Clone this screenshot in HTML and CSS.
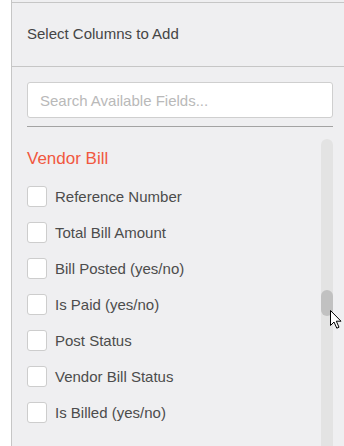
FILE: index.html
```html
<!DOCTYPE html>
<html lang="en">
<head>
<meta charset="utf-8">
<title>Select Columns</title>
<link rel="stylesheet" href="styles.css">
</head>
<body>
<div class="panel">
  <div class="header">Select Columns to Add</div>
  <div class="body">
    <div class="search-wrap">
      <input class="search" type="text" placeholder="Search Available Fields...">
    </div>
    <div class="list-area">
      <div class="list">
        <div class="group-title">Vendor Bill</div>
        <label class="row"><span class="box"></span><span class="label">Reference Number</span></label>
        <label class="row"><span class="box"></span><span class="label">Total Bill Amount</span></label>
        <label class="row"><span class="box"></span><span class="label">Bill Posted (yes/no)</span></label>
        <label class="row"><span class="box"></span><span class="label">Is Paid (yes/no)</span></label>
        <label class="row"><span class="box"></span><span class="label">Post Status</span></label>
        <label class="row"><span class="box"></span><span class="label">Vendor Bill Status</span></label>
        <label class="row"><span class="box"></span><span class="label">Is Billed (yes/no)</span></label>
      </div>
      <div class="track"><div class="thumb"></div></div>
    </div>
  </div>
  <svg class="cursor" width="13" height="19" viewBox="0 0 13 19" xmlns="http://www.w3.org/2000/svg">
    <path d="M0.5 0.5 L0.5 15.5 L4 12 L6.8 18.2 L9 17.2 L6.3 11.2 L11 11.2 Z" fill="#fff" stroke="#000" stroke-width="1" stroke-linejoin="miter"/>
  </svg>
</div>
</body>
</html>
```

FILE: styles.css
```css
html, body {
  margin: 0;
  padding: 0;
  background: #ffffff;
  overflow: hidden;
}

body {
  font-family: "Liberation Sans", Arial, sans-serif;
}

.panel {
  position: relative;
  margin-left: 11px;
  height: 446px;
  box-sizing: border-box;
  border-left: 1px solid #c6c6c6;
  background: #efeff1;
  padding-top: 2px;
  overflow: hidden;
}

.header {
  border-top: 1px solid #c6c6c6;
  border-bottom: 1px solid #c6c6c6;
  padding: 21px 15px 22px 15px;
  font-size: 15px;
  line-height: 20px;
  color: #454545;
}

.body {
  padding: 15px 11px 0 15px;
}

.search-wrap {
  padding-bottom: 8px;
  border-bottom: 1px solid #a3a3a3;
}

.search {
  display: block;
  width: 100%;
  height: 36px;
  box-sizing: border-box;
  margin: 0;
  border: 1px solid #cfcfcf;
  border-radius: 3px;
  background: #ffffff;
  padding: 0 12px;
  font-family: "Liberation Sans", Arial, sans-serif;
  font-size: 15px;
  color: #444;
  outline: none;
}

.search::placeholder {
  color: #b9b9b9;
}

.list-area {
  display: flex;
  align-items: flex-start;
}

.list {
  flex: 1;
  display: flex;
  flex-direction: column;
}

.group-title {
  margin-top: 21px;
  margin-bottom: 8px;
  font-size: 17px;
  line-height: 22px;
  color: #f1583f;
}

.row {
  display: flex;
  align-items: center;
  gap: 8px;
  height: 36px;
}

.box {
  width: 20px;
  height: 21px;
  box-sizing: border-box;
  border: 1px solid #cdcdcd;
  border-radius: 3px;
  background: #ffffff;
  flex: none;
}

.label {
  font-size: 15px;
  line-height: 20px;
  color: #4c4c4c;
  padding-top: 2px;
}

.track {
  flex: none;
  width: 12px;
  height: 320px;
  margin-top: 12px;
  background: #e3e3e3;
  border-radius: 6px 6px 0 0;
  display: flex;
  flex-direction: column;
}

.thumb {
  margin-top: 151px;
  height: 26px;
  border-radius: 6px;
  background: #c1c1c1;
}

.cursor {
  position: absolute;
  left: 318px;
  top: 310px;
}
```
